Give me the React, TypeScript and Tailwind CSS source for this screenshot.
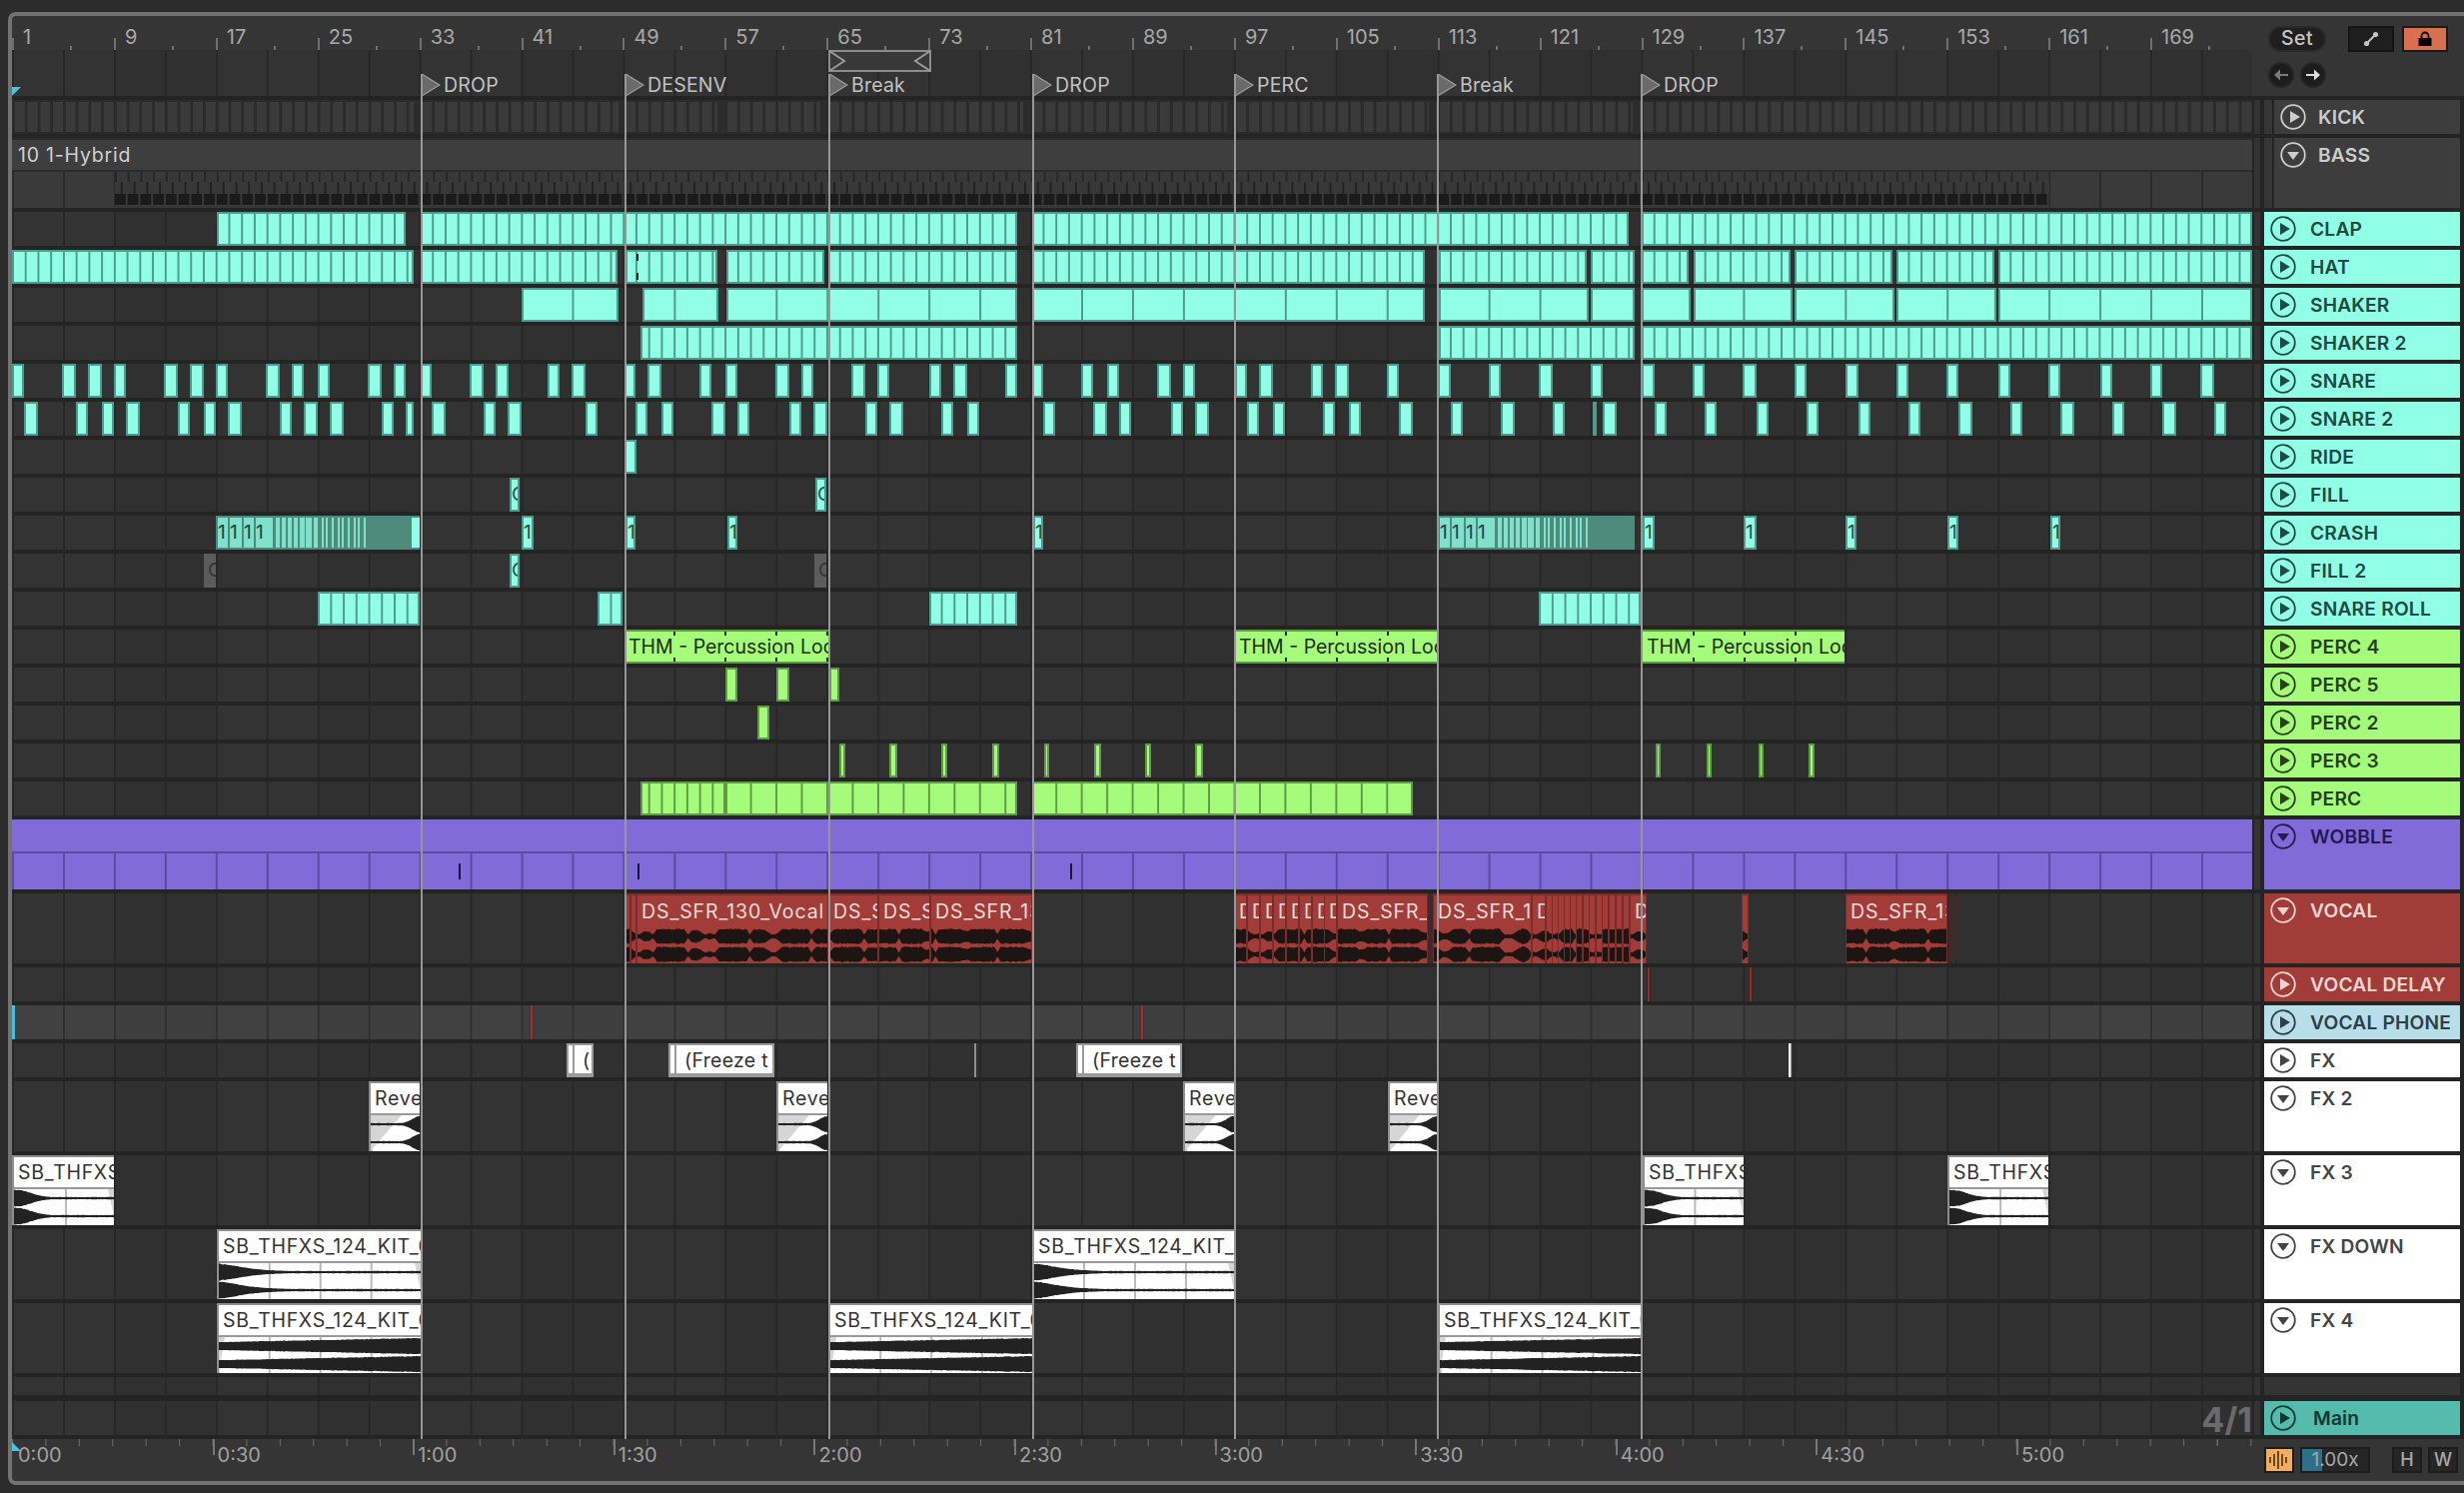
import React, { ReactNode } from 'react';

// all clip positions are screen x, the lane starts at x=12
const at = (a: number, b: number): React.CSSProperties => ({ left: a - 12, width: b - a });
const seg = (a: number, b: number): React.CSSProperties => ({ ...at(a, b), backgroundPositionX: -(a - 12) });

const LANE =
  'bg-[linear-gradient(90deg,#272727_2px,transparent_2px),linear-gradient(90deg,#333333_50%,#303030_50%)] bg-[length:50.96px_100%,203.84px_100%]';

const rand = (i: number, seed: number) => {
  const s = Math.sin(i * 12.9898 + seed * 78.233) * 43758.5453;
  return s - Math.floor(s);
};

function wavePath(w: number, h: number, amp: (t: number, i: number) => number, seed: number) {
  let d = '';
  [h * 0.25, h * 0.75].forEach((mid, ch) => {
    const top: string[] = [];
    const bottom: string[] = [];
    for (let x = 0, i = 0; x <= w; x += 1.5, i++) {
      const a = Math.min(1, amp(x / w, i)) * (h / 4 - 0.5);
      const n = 0.92 + 0.08 * rand(i + ch * 50, seed);
      top.push(`${x.toFixed(1)} ${(mid - a * n).toFixed(1)}`);
      bottom.unshift(`${x.toFixed(1)} ${(mid + a * n).toFixed(1)}`);
    }
    d += `M${top.join('L')}L${bottom.join('L')}Z`;
  });
  return d;
}

function Wave({ w, h, amp, seed = 1, fill = '#222222', fade }: { w: number; h: number; amp: (t: number, i: number) => number; seed?: number; fill?: string; fade?: string }) {
  return (
    <svg width={w} height={h} viewBox={`0 0 ${w} ${h}`} className="block">
      {fade && <polygon points={fade} fill="#d6d6d6" />}
      <path d={wavePath(w, h, amp, seed)} fill={fill} />
    </svg>
  );
}

const hill = (t: number, t0: number, p: number) => Math.max(0.14, 1 / (1 + Math.pow(t / t0, p)));
const decay = (t0: number, p: number) => (t: number) => hill(t, t0, p);
const rise = (t0: number, p: number) => (t: number) => hill(1 - t, t0, p);
const swell = (t: number) => 0.48 + 0.5 * t;
const vocalAmp = (seed: number) => (_t: number, i: number) => {
  const x = i * 1.5;
  const d = Math.abs(Math.sin(x / 19 + seed) + 0.7 * Math.sin(x / 6.7 + seed * 2));
  return Math.min(0.94, 0.2 + d * 1.7) * (0.86 + rand(i, seed + 3) * 0.14);
};

function TrackIcon({ open, className = '' }: { open?: boolean; className?: string }) {
  return (
    <svg width="26" height="26" viewBox="0 0 26 26" className={`shrink-0 ${className}`}>
      <circle cx="13" cy="13" r="11.8" fill="none" stroke="currentColor" strokeWidth="1.8" />
      {open ? <polygon points="7,10 19,10 13,18" fill="currentColor" /> : <polygon points="10,7 20,13 10,19" fill="currentColor" />}
    </svg>
  );
}

function Track({ h, name, open, head, label, lane, nested, children }: { h: string; name?: string; open?: boolean; head?: string; label?: string; lane?: string; nested?: boolean; children?: ReactNode }) {
  return (
    <div className={`flex ${h}`}>
      <div className={`relative w-[2242px] shrink-0 overflow-hidden ${lane ?? LANE}`}>{children}</div>
      <div className="ml-0.5 w-1.5 shrink-0 bg-[#333333]" />
      <div className="ml-1 flex w-[196px] shrink-0">
        {nested && <div className="mr-0.5 w-2 shrink-0 bg-[#363636]" />}
        <div className={`flex min-w-0 flex-1 items-start ${nested ? 'pl-[6px] bg-[#3d3d3d] text-[#cccccc]' : 'pl-[6px]'} ${head ?? ''}`}>
          {name && (
            <>
              <TrackIcon open={open} className="mt-1" />
              <span className={`mt-[5px] ${nested ? 'ml-[12px]' : 'ml-[14px]'} whitespace-nowrap text-[19.2px] font-semibold leading-6 tracking-[0.2px] ${label ?? ''}`}>{name}</span>
            </>
          )}
        </div>
      </div>
    </div>
  );
}

const TEAL = 'absolute inset-y-0 border-2 border-[#4e9c8c] bg-[#91fee6]';
const BARS = 'bg-[linear-gradient(90deg,#4e9c8c_2px,transparent_2px)] bg-origin-border bg-[length:12.74px_100%]';
const FOUR = 'bg-[linear-gradient(90deg,#4e9c8c_2px,transparent_2px)] bg-origin-border bg-[length:50.96px_100%]';

function BarClips({ clips }: { clips: number[][] }) {
  return <>{clips.map(([a, b]) => <div key={a} className={`${TEAL} ${BARS}`} style={seg(a, b)} />)}</>;
}
function FourClips({ clips }: { clips: number[][] }) {
  return <>{clips.map(([a, b]) => <div key={a} className={`${TEAL} ${FOUR}`} style={seg(a, b)} />)}</>;
}
function Hits({ clips }: { clips: number[][] }) {
  return <>{clips.map(([a, b]) => <div key={a} className={TEAL} style={at(a, b)} />)}</>;
}
function GreenHits({ clips }: { clips: number[][] }) {
  return <>{clips.map(([a, b]) => <div key={a} className="absolute inset-y-0 border-2 border-[#5f9c47] bg-[#a5fc7b]" style={at(a, b)} />)}</>;
}
function SmallClip({ a, b, text }: { a: number; b: number; text: string }) {
  return (
    <div className={`${TEAL} overflow-hidden text-[19px] leading-[30px] text-[#2b4d46]`} style={at(a, b)}>
      {text}
    </div>
  );
}

const CRASH_SLICES = [
  [218, 228, '1'], [230, 242, '1'], [244, 254, '1'], [256, 268, '1'], [268, 273, ''], [276, 280, ''], [282, 286, ''], [288, 292, ''], [294, 298, ''], [300, 305, ''], [306, 312, ''], [314, 318, ''],
  [322, 324, ''], [326, 328, ''], [332, 334, ''], [338, 340, ''], [342, 344, ''], [348, 350, ''], [354, 356, ''], [358, 360, ''], [364, 366, ''],
] as [number, number, string][];

function CrashGroup({ a, b, end }: { a: number; b: number; end?: boolean }) {
  const shift = a - 216;
  return (
    <div className="absolute inset-y-0 border-y-2 border-l-2 border-[#4b8a7c] bg-[#4f8b7d]" style={at(a, b)}>
      {CRASH_SLICES.map(([x0, x1, t]) => (
        <div key={x0} className="absolute inset-y-0 overflow-hidden bg-[#7fe0cc] text-[19px] leading-[30px] text-[#24423c]" style={{ left: x0 + shift - a - 2, width: x1 - x0 }}>
          {t}
        </div>
      ))}
      {end && <div className="absolute inset-y-0 right-0 w-2 bg-[#91fee6]" />}
    </div>
  );
}

function ThmClip({ a, b }: { a: number; b: number }) {
  const ticks = [0, 1, 2, 3].map((k) => Math.ceil((a - 12) / 50.96 + 0.1 + k) * 50.96 + 12 - a);
  return (
    <div className="absolute inset-y-0 overflow-hidden border-y-2 border-[#5f9c47] bg-[#a5fc7b] pl-1 text-[19.5px] leading-[30px] whitespace-nowrap text-[#1d2b15]" style={at(a, b)}>
      THM - Percussion Loop
      {ticks.filter((t) => t < b - a).map((t) => (
        <React.Fragment key={t}>
          <div className="absolute top-0 h-1 w-0.5 bg-[#1d2b15]" style={{ left: t }} />
          <div className="absolute bottom-0 h-1 w-0.5 bg-[#1d2b15]" style={{ left: t }} />
        </React.Fragment>
      ))}
    </div>
  );
}

function VocalSlice({ a, b, name, seed = 2 }: { a: number; b: number; name?: string; seed?: number }) {
  const w = b - a;
  return (
    <div className="absolute inset-y-0 flex flex-col overflow-hidden border-x border-t-2 border-[#7b2b29] bg-[#a13c38]" style={at(a, b)}>
      <div className="h-8 shrink-0 pl-1 text-[19.5px] leading-[32px] tracking-[0.9px] whitespace-nowrap text-[#efdcda]">{name}</div>
      <Wave w={w} h={36} amp={vocalAmp(seed)} seed={seed} fill="#1d1513" />
    </div>
  );
}

function WhiteClip({ a, b, name, amp, fade, seed = 4 }: { a: number; b: number; name: string; amp: (t: number, i: number) => number; fade: (w: number) => string; seed?: number }) {
  const w = b - a;
  return (
    <div className="absolute inset-y-0 flex flex-col overflow-hidden border-t-2 border-l-2 border-[#8f8f8f] bg-white" style={at(a, b)}>
      <div className="h-[30px] shrink-0 pl-1 text-[19.5px] leading-[30px] tracking-[0.7px] whitespace-nowrap text-[#333333]">{name}</div>
      <div className="h-0.5 shrink-0 bg-[#999999]" />
      <div className="bg-[linear-gradient(90deg,#b9b9b9_2px,transparent_2px)] bg-[length:50.96px_100%]" style={{ backgroundPositionX: -(a - 12) }}>
        <Wave w={w} h={36} amp={amp} seed={seed} fade={fade(w)} />
      </div>
    </div>
  );
}

const fadeRight = (w: number) => `${w - 8},0 ${w},0 ${w},36`;
const fadeLeft = (w: number) => `0,0 ${w * 0.6},0 0,36`;
const fadeSmall = () => '0,0 6,0 0,36';

function FreezeClip({ a, b, name }: { a: number; b: number; name: string }) {
  return (
    <div className="absolute inset-y-0 overflow-hidden border-2 border-b-4 border-[#9a9a9a] bg-white pl-[14px] text-[19.5px] leading-[30px] tracking-[0.3px] whitespace-nowrap text-[#333333]" style={at(a, b)}>
      <div className="absolute inset-y-0 left-1 w-0.5 bg-[#9a9a9a]" />
      {name}
    </div>
  );
}

const SNARE = [
  [12, 24], [62, 76], [88, 102], [114, 126], [164, 178], [190, 204], [216, 228], [266, 280], [292, 304], [318, 330], [368, 382], [394, 406], [421, 432], [470, 484], [496, 509], [548, 560], [572, 586], [625, 636], [648, 662], [700, 712], [726, 738], [776, 790],
  [802, 814], [852, 866], [878, 890], [930, 942], [954, 968], [1006, 1018], [1033, 1044], [1082, 1094], [1108, 1120], [1158, 1172], [1184, 1196], [1236, 1248], [1260, 1274], [1312, 1324], [1336, 1350], [1388, 1400], [1439, 1452], [1490, 1502],
  [1540, 1554], [1592, 1604], [1643, 1656], [1694, 1706], [1744, 1758], [1796, 1808], [1847, 1860], [1898, 1910], [1948, 1960], [2000, 2012], [2050, 2062], [2102, 2114], [2152, 2164], [2202, 2216],
];
const SNARE2 = [
  [24, 38], [76, 88], [102, 114], [126, 140], [178, 190], [204, 216], [228, 242], [280, 292], [304, 318], [330, 344], [382, 394], [406, 414], [432, 446], [484, 496], [508, 522], [586, 598], [636, 648], [662, 674], [712, 726], [738, 750], [790, 802],
  [814, 828], [866, 878], [890, 904], [942, 954], [968, 980], [1044, 1056], [1094, 1108], [1120, 1132], [1172, 1184], [1196, 1210], [1248, 1260], [1274, 1286], [1324, 1336], [1350, 1362], [1400, 1414], [1452, 1464], [1502, 1516],
  [1554, 1566], [1594, 1596], [1604, 1618], [1656, 1668], [1706, 1718], [1758, 1770], [1808, 1820], [1860, 1872], [1910, 1922], [1960, 1974], [2012, 2024], [2062, 2076], [2114, 2126], [2164, 2178], [2216, 2228],
];

const CYAN_HEAD = 'bg-[#91fee6] text-[#1f4a42]';
const GREEN_HEAD = 'bg-[#a5fc7b] text-[#27401a]';
const WHITE_HEAD = 'bg-white text-[#444444]';
const RED_HEAD = 'bg-[#a13c38] text-[#ecd6d4]';

const LOCATORS: [number, string][] = [[421, 'DROP'], [625, 'DESENV'], [829, 'Break'], [1033, 'DROP'], [1235, 'PERC'], [1438, 'Break'], [1642, 'DROP']];
const BAR_LABELS = Array.from({ length: 22 }, (_, i) => i * 8 + 1);
const TIME_LABELS = ['0:00', '0:30', '1:00', '1:30', '2:00', '2:30', '3:00', '3:30', '4:00', '4:30', '5:00'];

function Ruler() {
  return (
    <div className="flex h-[34px]">
      {BAR_LABELS.map((n) => (
        <div key={n} className="flex w-[101.92px] shrink-0 items-end">
          <div className="h-3 w-0.5 shrink-0 bg-[#6f6f6f]" />
          <span className="mb-[1px] ml-[9px] w-[47px] text-[20px] leading-6 text-[#a8a8a8]">{n}</span>
          <div className="h-1 w-0.5 shrink-0 bg-[#6f6f6f]" />
        </div>
      ))}
    </div>
  );
}

function Timeline() {
  return (
    <div className="flex h-[42px] w-[2242px] shrink-0 overflow-hidden">
      <div className="flex w-[200.6px] shrink-0 bg-[linear-gradient(90deg,#6f6f6f_1px,transparent_1px)] bg-[length:33.43px_7px] bg-repeat-x pl-[6px]">
        <span className="mt-[4px] text-[20px] leading-6 text-[#a0a0a0]">{TIME_LABELS[0]}</span>
      </div>
      {TIME_LABELS.slice(1).map((t) => (
        <div key={t} className="flex w-[200.6px] shrink-0 bg-[linear-gradient(90deg,#6f6f6f_1px,transparent_1px)] bg-[length:33.43px_7px] bg-repeat-x">
          <div className="h-4 w-0.5 shrink-0 bg-[#777777]" />
          <span className="mt-[4px] ml-[3px] text-[20px] leading-6 text-[#a0a0a0]">{t}</span>
        </div>
      ))}
      <div className="w-[236px] shrink-0 bg-[linear-gradient(90deg,#6f6f6f_1px,transparent_1px)] bg-[length:33.43px_7px] bg-repeat-x" />
    </div>
  );
}

function TopPanel() {
  return (
    <div className="ml-4 w-[196px] pt-[10px]">
      <div className="flex items-center">
        <div className="flex h-[26px] w-[58px] items-center justify-center rounded-full border-2 border-[#2a2a2a] bg-[#1f1f1f] text-[19.5px] font-medium tracking-wide text-[#c4c4c4]">Set</div>
        <div className="ml-[22px] flex h-[26px] w-[46px] items-center justify-center border-2 border-[#141414] bg-[#1f1f1f]">
          <svg width="16" height="16" viewBox="0 0 16 16">
            <line x1="3.5" y1="12.5" x2="12.5" y2="3.5" stroke="#c4c4c4" strokeWidth="2" />
            <circle cx="3.5" cy="12.5" r="2.6" fill="#c4c4c4" />
            <circle cx="12.5" cy="3.5" r="2.6" fill="#c4c4c4" />
          </svg>
        </div>
        <div className="ml-2 flex h-[26px] w-[46px] items-center justify-center border-2 border-[#1a1a1a] bg-[#d9704d]">
          <svg width="16" height="16" viewBox="0 0 16 16">
            <path d="M4.5 7V5a3.5 3.5 0 0 1 7 0v2" fill="none" stroke="#000" strokeWidth="1.8" />
            <rect x="1.5" y="7" width="13" height="8" fill="#000" />
          </svg>
        </div>
      </div>
      <div className="mt-[10px] flex gap-1.5">
        {[0, 1].map((i) => (
          <div key={i} className="flex h-[26px] w-[26px] items-center justify-center rounded-full border-2 border-[#262626] bg-[#1c1c1c]">
            <svg width="16" height="14" viewBox="0 0 16 14" className={i ? '' : 'rotate-180'}>
              <path d="M1 6h8V1.5L15 7l-6 5.5V8H1z" fill={i ? '#dcdcdc' : '#7a7a7a'} />
            </svg>
          </div>
        ))}
      </div>
    </div>
  );
}

function BottomPanel() {
  return (
    <div className="flex h-[42px] items-start pt-2 pl-[12px]">
      <div className="flex h-[26px] w-[30px] items-center justify-center border-2 border-[#1c1c1c] bg-[#f4ad5c]">
        <svg width="20" height="18" viewBox="0 0 20 18">
          {[[1, 6, 12], [5, 3, 15], [9, 0, 18], [13, 3, 15], [17, 6, 12]].map(([x, y1, y2]) => (
            <line key={x} x1={x} x2={x} y1={y1} y2={y2} stroke="#2a2014" strokeWidth="1.4" />
          ))}
        </svg>
      </div>
      <div className="relative ml-1.5 h-[26px] w-[70px] border-2 border-[#1c1c1c] bg-[#262626] text-center text-[19px] leading-[22px] text-[#a8a8a8]">
        <div className="absolute inset-y-0 left-0 w-5 bg-[#2e6f8a]" />
        <span className="relative">1.00x</span>
      </div>
      <div className="ml-[22px] h-[26px] w-[30px] border-2 border-[#1c1c1c] bg-[#262626] text-center text-[18px] font-medium leading-[22px] text-[#a8a8a8]">H</div>
      <div className="ml-1.5 h-[26px] w-[30px] border-2 border-[#1c1c1c] bg-[#262626] text-center text-[18px] font-medium leading-[22px] text-[#a8a8a8]">W</div>
    </div>
  );
}

export default function App() {
  const dim = 'absolute inset-y-0 border-y-2 border-[#3a1f1e]';
  return (
    <div className="h-[1494px] w-[2466px] overflow-hidden bg-[#2c2c2c] pt-3 pl-2 font-[Inter,sans-serif]">
      <div className="relative flex h-[1474px] flex-col overflow-hidden rounded-l-lg border-y-4 border-l-4 border-[#737373] bg-[#353535]">
        {/* ruler and locators */}
        <div className="flex h-20 shrink-0">
          <div className="w-[2242px] shrink-0">
            <Ruler />
            <div className={`relative h-[46px] ${LANE} bg-[#363636]`}>
              <div className="absolute top-0 left-[817px]">
                <svg width="103" height="22" viewBox="0 0 103 22">
                  <path d="M1 1H102V21H1z" fill="#383838" stroke="#8c8c8c" strokeWidth="2" />
                  <path d="M1 1l15 10L1 21M102 1L87 11l15 10" fill="none" stroke="#9a9a9a" strokeWidth="2" />
                </svg>
              </div>
              {LOCATORS.map(([x, name]) => (
                <div key={x} className="absolute top-6 flex h-[22px] items-center" style={{ left: x - 12 }}>
                  <svg width="20" height="22" viewBox="0 0 20 22">
                    <polygon points="1,0 19,11 1,22" fill="#6a6a6a" stroke="#a0a0a0" strokeWidth="1.2" />
                  </svg>
                  <span className="ml-[3px] text-[19.5px] leading-6 tracking-[0.2px] text-[#c2c2c2]">{name}</span>
                </div>
              ))}
              <svg width="9" height="9" viewBox="0 0 9 9" className="absolute bottom-0 left-0">
                <polygon points="0,0 9,0 0,9" fill="#4bc3d9" />
              </svg>
            </div>
          </div>
          <TopPanel />
        </div>

        {/* tracks */}
        <div className="flex flex-col gap-1 bg-[#242424] py-1">
          <Track h="h-[34px]" name="KICK" nested lane="bg-[#2b2b2b] py-0.5">
            <div className="h-full bg-[#3a3a3a] bg-[linear-gradient(90deg,#2b2b2b_3px,transparent_3px)] bg-[length:12.74px_100%]" />
            {[414, 619, 718, 821, 1024, 1228, 1430, 1634].map((x) => (
              <div key={x} className="absolute inset-y-0 w-[7px] bg-[#2c2c2c]" style={{ left: x - 12 }} />
            ))}
          </Track>
          <Track h="h-[70px]" name="BASS" open nested lane="bg-[#2b2b2b]">
            <div className="mt-0.5 h-[30px] bg-[#3e3e3e] pl-[6px] text-[19.5px] leading-[30px] tracking-[0.8px] text-[#d0d0d0]">10 1-Hybrid</div>
            <div className="relative mt-0.5 h-9 bg-[#3a3a3a] bg-[linear-gradient(90deg,#2b2b2b_2px,transparent_2px)] bg-[length:50.96px_100%]">
              <div className="absolute inset-y-0 flex flex-col bg-[#383838]" style={at(115, 2051)}>
                <div className="h-[10px] bg-[linear-gradient(90deg,#262626_2px,transparent_2px)] bg-[length:12.74px_100%]" />
                <div className="h-3 bg-[linear-gradient(90deg,transparent_6px,#222222_6px,#222222_8px,transparent_8px)] bg-[length:12.74px_100%]" />
                <div className="h-[11px] bg-[linear-gradient(90deg,#1b1b1b_11px,transparent_11px)] bg-[length:12.74px_100%]" />
              </div>
            </div>
          </Track>
          <Track h="h-[34px]" name="CLAP" head={CYAN_HEAD}><BarClips clips={[[217, 406], [421, 1018], [1033, 1630], [1643, 2254]]} /></Track>
          <Track h="h-[34px]" name="HAT" head={CYAN_HEAD}>
            <BarClips clips={[[12, 414], [421, 618], [626, 718], [727, 825], [829, 1018], [1033, 1426], [1440, 1588], [1592, 1636], [1643, 1690], [1695, 1792], [1796, 1894], [1898, 1996], [2000, 2254]]} />
            <div className="absolute top-1 h-[7px] w-0.5 bg-[#1c1c1c]" style={{ left: 625 }} />
            <div className="absolute bottom-1 h-[7px] w-0.5 bg-[#1c1c1c]" style={{ left: 625 }} />
          </Track>
          <Track h="h-[34px]" name="SHAKER" head={CYAN_HEAD}><FourClips clips={[[522, 619], [643, 719], [727, 1018], [1033, 1426], [1440, 1590], [1592, 1636], [1643, 1692], [1695, 1794], [1796, 1896], [1898, 1998], [2000, 2254]]} /></Track>
          <Track h="h-[34px]" name="SHAKER 2" head={CYAN_HEAD}><BarClips clips={[[641, 1018], [1440, 1636], [1643, 2254]]} /></Track>
          <Track h="h-[34px]" name="SNARE" head={CYAN_HEAD}><Hits clips={SNARE} /></Track>
          <Track h="h-[34px]" name="SNARE 2" head={CYAN_HEAD}><Hits clips={SNARE2} /></Track>
          <Track h="h-[34px]" name="RIDE" head={CYAN_HEAD}><Hits clips={[[625, 637]]} /></Track>
          <Track h="h-[34px]" name="FILL" head={CYAN_HEAD}>
            <SmallClip a={510} b={520} text="C" />
            <SmallClip a={816} b={827} text="C" />
          </Track>
          <Track h="h-[34px]" name="CRASH" head={CYAN_HEAD}>
            <CrashGroup a={216} b={420} end />
            <SmallClip a={522} b={534} text="1" />
            <SmallClip a={626} b={636} text="1" />
            <SmallClip a={728} b={738} text="1" />
            <SmallClip a={1034} b={1044} text="1" />
            <CrashGroup a={1439} b={1636} />
            <SmallClip a={1644} b={1656} text="1" />
            <SmallClip a={1745} b={1758} text="1" />
            <SmallClip a={1847} b={1858} text="1" />
            <SmallClip a={1949} b={1960} text="1" />
            <SmallClip a={2052} b={2062} text="1" />
          </Track>
          <Track h="h-[34px]" name="FILL 2" head={CYAN_HEAD}>
            <div className="absolute inset-y-0 overflow-hidden bg-[#5c5c5c] pl-1 text-[19px] leading-[34px] text-[#333333]" style={at(204, 216)}>C</div>
            <SmallClip a={510} b={520} text="C" />
            <div className="absolute inset-y-0 overflow-hidden bg-[#5c5c5c] pl-1 text-[19px] leading-[34px] text-[#333333]" style={at(815, 827)}>C</div>
          </Track>
          <Track h="h-[34px]" name="SNARE ROLL" head={CYAN_HEAD}><BarClips clips={[[318, 420], [598, 623], [930, 1018], [1540, 1642]]} /></Track>
          <Track h="h-[34px]" name="PERC 4" head={GREEN_HEAD}>
            <ThmClip a={625} b={829} />
            <ThmClip a={1236} b={1439} />
            <ThmClip a={1644} b={1846} />
          </Track>
          <Track h="h-[34px]" name="PERC 5" head={GREEN_HEAD}><GreenHits clips={[[726, 738], [777, 790], [830, 840]]} /></Track>
          <Track h="h-[34px]" name="PERC 2" head={GREEN_HEAD}><GreenHits clips={[[758, 770]]} /></Track>
          <Track h="h-[34px]" name="PERC 3" head={GREEN_HEAD}><GreenHits clips={[[840, 846], [890, 898], [942, 948], [993, 1000], [1045, 1050], [1095, 1102], [1146, 1152], [1196, 1204], [1657, 1662], [1708, 1713], [1760, 1765], [1810, 1816]]} /></Track>
          <Track h="h-[34px]" name="PERC" head={GREEN_HEAD}>
            <div className="absolute inset-y-0 border-2 border-[#5f9c47] bg-[#a5fc7b] bg-[linear-gradient(90deg,#5f9c47_2px,transparent_2px)] bg-origin-border bg-[length:12.74px_100%]" style={seg(641, 726)} />
            <div className="absolute inset-y-0 border-2 border-[#5f9c47] bg-[#a5fc7b] bg-[linear-gradient(90deg,#5f9c47_2px,transparent_2px)] bg-origin-border bg-[length:25.48px_100%]" style={seg(726, 1018)} />
            <div className="absolute inset-y-0 border-2 border-[#5f9c47] bg-[#a5fc7b] bg-[linear-gradient(90deg,#5f9c47_2px,transparent_2px)] bg-origin-border bg-[length:25.48px_100%]" style={seg(1033, 1414)} />
          </Track>
          <Track h="h-[70px]" name="WOBBLE" open head="bg-[#816bd9] text-[#241a52]" lane="bg-[#816bd9]">
            <div className="mt-8 h-0.5 bg-[#5c4aa3]" />
            <div className="h-9 bg-[linear-gradient(90deg,#5c4aa3_2px,transparent_2px)] bg-[length:50.96px_100%]" />
            {[459, 638, 1071].map((x) => (
              <div key={x} className="absolute top-[44px] h-4 w-0.5 bg-[#1c1440]" style={{ left: x - 12 }} />
            ))}
          </Track>
          <Track h="h-[70px]" name="VOCAL" open head={RED_HEAD}>
            <VocalSlice a={626} b={631} seed={1} />
            <VocalSlice a={631} b={637} seed={2} />
            <VocalSlice a={637} b={829} name="DS_SFR_130_Vocal" seed={3} />
            <VocalSlice a={829} b={879} name="DS_SFR" seed={4} />
            <VocalSlice a={879} b={931} name="DS_SFR" seed={5} />
            <VocalSlice a={931} b={1033} name="DS_SFR_130" seed={6} />
            {[1235, 1248, 1261, 1274, 1287, 1300, 1313, 1325].map((x, i) => (
              <VocalSlice key={x} a={x} b={x + 13} name="DS" seed={i + 1} />
            ))}
            <VocalSlice a={1338} b={1429} name="DS_SFR_130" seed={7} />
            <VocalSlice a={1434} b={1533} name="DS_SFR_130" seed={8} />
            <VocalSlice a={1533} b={1547} name="DS" seed={9} />
            {[1547, 1553, 1559, 1565, 1571, 1577, 1584, 1590, 1597, 1603, 1610, 1617, 1624].map((x, i) => (
              <VocalSlice key={x} a={x} b={x + 7} seed={i + 2} />
            ))}
            <VocalSlice a={1631} b={1648} name="DS" seed={3} />
            <VocalSlice a={1743} b={1750} seed={2} />
            <VocalSlice a={1847} b={1949} name="DS_SFR_130" seed={5} />
            <div className={`${dim} bg-[#4a2524]`} style={at(1952, 1954)} />
            <div className={`${dim} bg-[#4a2524]`} style={at(1957, 1959)} />
          </Track>
          <Track h="h-[34px]" name="VOCAL DELAY" head={RED_HEAD}>
            <div className="absolute inset-y-0 border-x border-[#3f2120] bg-[#8d312e]" style={at(1648, 1652)} />
            <div className="absolute inset-y-0 border-x border-[#3f2120] bg-[#8d312e]" style={at(1750, 1754)} />
          </Track>
          <Track h="h-[34px]" name="VOCAL PHONE" head="bg-[#b7dee9] text-[#2c4048]" lane="bg-[linear-gradient(90deg,#303030_2px,transparent_2px),linear-gradient(90deg,#414141_50%,#3e3e3e_50%)] bg-[length:50.96px_100%,203.84px_100%]">
            <div className="absolute inset-y-0 left-0 w-[3px] bg-[#47bfd6]" />
            <div className="absolute inset-y-0 border-x border-[#4a2a2a] bg-[#9a3532]" style={at(530, 534)} />
            <div className="absolute inset-y-0 border-x border-[#4a2a2a] bg-[#9a3532]" style={at(1141, 1145)} />
          </Track>
          <Track h="h-[34px]" name="FX" head={WHITE_HEAD}>
            <FreezeClip a={567} b={594} name="(Freeze t" />
            <FreezeClip a={669} b={775} name="(Freeze t" />
            <div className="absolute inset-y-0 w-0.5 bg-[#8f8f8f]" style={{ left: 963 }} />
            <FreezeClip a={1077} b={1183} name="(Freeze t" />
            <div className="absolute inset-y-0 w-[3px] border-r border-[#9a9a9a] bg-white" style={{ left: 1778 }} />
          </Track>
          <Track h="h-[70px]" name="FX 2" open head={WHITE_HEAD}>
            {[[369, 420], [777, 828], [1184, 1235], [1389, 1438]].map(([a, b], i) => (
              <WhiteClip key={a} a={a} b={b} name="Reverb" amp={rise(0.22, 3)} fade={fadeLeft} seed={i + 1} />
            ))}
          </Track>
          <Track h="h-[70px]" name="FX 3" open head={WHITE_HEAD}>
            {[[12, 114], [1644, 1745], [1949, 2050]].map(([a, b], i) => (
              <WhiteClip key={a} a={a} b={b} name="SB_THFXS_124" amp={decay(0.2, 3)} fade={fadeRight} seed={i + 3} />
            ))}
          </Track>
          <Track h="h-[70px]" name="FX DOWN" open head={WHITE_HEAD}>
            {[[217, 421], [1033, 1235]].map(([a, b], i) => (
              <WhiteClip key={a} a={a} b={b} name="SB_THFXS_124_KIT_01" amp={decay(0.14, 2)} fade={fadeRight} seed={i + 6} />
            ))}
          </Track>
          <Track h="h-[70px]" name="FX 4" open head={WHITE_HEAD}>
            {[[217, 421], [829, 1033], [1439, 1642]].map(([a, b], i) => (
              <WhiteClip key={a} a={a} b={b} name="SB_THFXS_124_KIT_01" amp={swell} fade={fadeSmall} seed={i + 8} />
            ))}
          </Track>
          <Track h="h-[18px]" head="bg-[#343434]" />
          <div className="mt-0.5">
            <Track h="h-[34px]" name="Main" head="bg-[#55bbac] text-[#0e3a33]" label="ml-[17px] font-medium">
              <span className="absolute top-0 right-0 text-[34px] leading-[38px] font-bold text-[#6b6b6b]">4/1</span>
            </Track>
          </div>
        </div>

        {/* transport ruler */}
        <div className="relative flex">
          <Timeline />
          <BottomPanel />
          <svg width="9" height="9" viewBox="0 0 9 9" className="absolute top-[3px] left-0">
            <polygon points="0,0 9,9 0,9" fill="#4bc3d9" />
          </svg>
        </div>

        {/* locator lines sit on top of the clips */}
        {LOCATORS.map(([x]) => (
          <div key={x} className="pointer-events-none absolute top-[58px] h-[1366px] w-0.5 bg-[#979797]" style={{ left: x - 12 }} />
        ))}
      </div>
    </div>
  );
}
